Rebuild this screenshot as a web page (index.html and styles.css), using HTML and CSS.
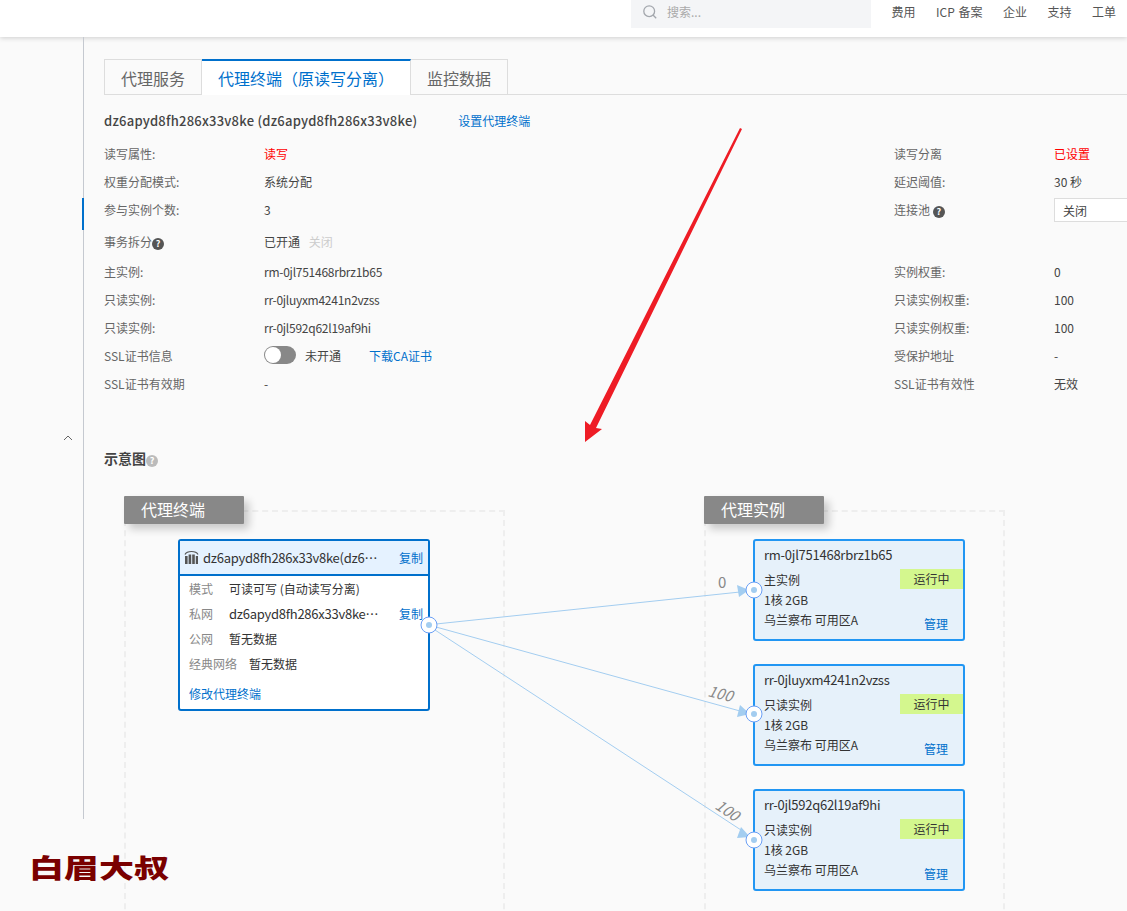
FILE: index.html
```html
<!DOCTYPE html>
<html lang="zh-CN">

<head>
<meta charset="utf-8">
<title>代理终端</title>
<link rel="stylesheet" href="styles.css">
</head>

<body>
	<div class="top">
		<div class="search">
			<svg class="search-icon" width="16" height="16" viewBox="0 0 16 16"><circle cx="7.2" cy="7.2" r="5.4" fill="none" stroke="#a3a7ad" stroke-width="1.3"/><path d="M11 11l3.2 3.2" stroke="#a3a7ad" stroke-width="1.3"/></svg>
			<span>搜索...</span>
		</div>
		<a href="#">费用</a>
		<a href="#">ICP 备案</a>
		<a href="#">企业</a>
		<a href="#">支持</a>
		<a href="#">工单</a>
	</div>

	<div class="page">
		<div class="side">
			<div class="side-mark"></div>
			<svg class="side-up" width="10" height="6" viewBox="0 0 10 6"><path d="M1 5l4-4 4 4" fill="none" stroke="#666" stroke-width="1"/></svg>
		</div>

		<div class="main">
			<div class="tabs">
				<a class="tab" href="#">代理服务</a>
				<a class="tab tab-on" href="#">代理终端（原读写分离）</a>
				<a class="tab" href="#">监控数据</a>
			</div>

			<div class="title-row">
				<span class="name">dz6apyd8fh286x33v8ke (dz6apyd8fh286x33v8ke)</span>
				<a class="link" href="#">设置代理终端</a>
			</div>

			<div class="info">
				<span class="lab">读写属性:</span><span class="red">读写</span>
				<span class="lab">读写分离</span><span class="red">已设置</span>

				<span class="lab">权重分配模式:</span><span>系统分配</span>
				<span class="lab">延迟阈值:</span><span>30 秒</span>

				<span class="lab">参与实例个数:</span><span>3</span>
				<span class="lab">连接池 <i class="help">?</i></span><span class="select">关闭</span>

				<span class="lab low">事务拆分<i class="help">?</i></span><span class="low">已开通 <em class="off">关闭</em></span>
				<span></span><span></span>

				<span class="lab">主实例:</span><span class="code">rm-0jl751468rbrz1b65</span>
				<span class="lab">实例权重:</span><span>0</span>

				<span class="lab">只读实例:</span><span class="code">rr-0jluyxm4241n2vzss</span>
				<span class="lab">只读实例权重:</span><span>100</span>

				<span class="lab">只读实例:</span><span class="code">rr-0jl592q62l19af9hi</span>
				<span class="lab">只读实例权重:</span><span>100</span>

				<span class="lab">SSL证书信息</span>
				<span class="ssl"><b class="switch"></b><span>未开通</span><a class="link" href="#">下载CA证书</a></span>
				<span class="lab">受保护地址</span><span>-</span>

				<span class="lab">SSL证书有效期</span><span>-</span>
				<span class="lab">SSL证书有效性</span><span>无效</span>
			</div>

			<h4 class="sub">示意图<i class="help help-light">?</i></h4>

			<div class="canvas">
				<div class="panel panel-a"></div>
				<div class="panel panel-b"></div>
				<div class="tag tag-a">代理终端</div>
				<div class="tag tag-b">代理实例</div>

				<div class="proxy">
					<div class="proxy-head">
						<svg class="proxy-icon" width="15" height="16" viewBox="0 0 15 16"><path d="M1 5.5C3 1.5 12 1.5 14 5.5" fill="none" stroke="#555" stroke-width="1.2"/><path d="M1 7h2.6v8H1zM4.6 5.5h2.6V15H4.6zM8.2 5.5h2.6V15H8.2zM11.8 7H14v8h-2.2z" fill="#555"/></svg>
						<span class="code head-cut">dz6apyd8fh286x33v8ke(dz6…</span>
						<a class="link copy" href="#">复制</a>
					</div>
					<div class="proxy-row"><span class="k">模式</span><span>可读可写 (自动读写分离)</span></div>
					<div class="proxy-row"><span class="k">私网</span><span class="code net-cut">dz6apyd8fh286x33v8ke…</span><a class="link copy" href="#">复制</a></div>
					<div class="proxy-row"><span class="k">公网</span><span>暂无数据</span></div>
					<div class="proxy-row"><span class="k k-wide">经典网络</span><span>暂无数据</span></div>
					<a class="link edit" href="#">修改代理终端</a>
				</div>

				<div class="inst inst-1">
					<div class="inst-name code">rm-0jl751468rbrz1b65</div>
					<div class="inst-row"><span>主实例</span><span class="run">运行中</span></div>
					<div class="inst-row">1核 2GB</div>
					<div class="inst-row">乌兰察布 可用区A</div>
					<a class="link manage" href="#">管理</a>
				</div>
				<div class="inst inst-2">
					<div class="inst-name code">rr-0jluyxm4241n2vzss</div>
					<div class="inst-row"><span>只读实例</span><span class="run">运行中</span></div>
					<div class="inst-row">1核 2GB</div>
					<div class="inst-row">乌兰察布 可用区A</div>
					<a class="link manage" href="#">管理</a>
				</div>
				<div class="inst inst-3">
					<div class="inst-name code">rr-0jl592q62l19af9hi</div>
					<div class="inst-row"><span>只读实例</span><span class="run">运行中</span></div>
					<div class="inst-row">1核 2GB</div>
					<div class="inst-row">乌兰察布 可用区A</div>
					<a class="link manage" href="#">管理</a>
				</div>

				<svg class="wires" width="1023" height="431" viewBox="104 480 1023 431">
					<g stroke="#a3cdf0" stroke-width="1" fill="none">
						<path d="M436 624L740 592"/>
						<path d="M436 627L740 711"/>
						<path d="M435 630L741 830"/>
					</g>
					<g fill="#a3cdf0">
						<path d="M749 590L737 585L739 597z"/>
						<path d="M750 714L740 705L737 717z"/>
						<path d="M750 837L741 827L737 838z"/>
					</g>
					<g fill="#fff" stroke="#6a9ff5" stroke-width="1">
						<circle cx="429" cy="625" r="8"/>
						<circle cx="754" cy="590" r="8"/>
						<circle cx="754" cy="714" r="8"/>
						<circle cx="754" cy="840" r="8"/>
					</g>
					<g fill="#a3cdf0">
						<circle cx="429" cy="625" r="3"/>
						<circle cx="754" cy="590" r="3"/>
						<circle cx="754" cy="714" r="3"/>
						<circle cx="754" cy="840" r="3"/>
					</g>
					<g class="weights">
						<text class="weight-flat" x="718" y="588">0</text>
						<text transform="translate(707 696) rotate(14)">100</text>
						<text transform="translate(714 808) rotate(34)">100</text>
					</g>
				</svg>
			</div>
		</div>
	</div>

	<svg class="arrow" width="170" height="320" viewBox="580 125 170 320"><path d="M740 128L742 129L596 428L602 429L585 442L585 421L590 425z" fill="#ee1c25"/></svg>
	<div class="mark">白眉大叔</div>
</body>

</html>
```
FILE: styles.css
```css
html, body {
	margin: 0;
	height: 911px;
	overflow: hidden;
}

body {
	background-color: #fafafa;
	color: #333;
	font-family: "Noto Sans CJK SC", sans-serif;
	font-size: 12px;
	position: relative;
}

a {
	text-decoration: none;
}

.link {
	color: #0070cc;
}

.code {
	letter-spacing: -0.25px;
}

.top {
	height: 37px;
	background-color: #fff;
	box-shadow: 0 1px 5px rgba(0, 0, 0, 0.18);
	display: flex;
	justify-content: flex-end;
	gap: 20.5px;
	padding-right: 11px;
	position: relative;
}

.top a {
	color: #555;
	line-height: 24px;
	word-spacing: 1px;
}

.search {
	width: 240px;
	height: 28px;
	padding: 0 0 5px 11px;
	background-color: #f4f5f7;
	color: #aaa;
	display: flex;
	align-items: center;
	gap: 9px;
	box-sizing: border-box;
}

.page {
	display: flex;
}

.side {
	width: 83px;
	height: 782px;
	border-right: 1px solid #c5c9d0;
	position: relative;
	flex: none;
}

.side-mark {
	position: absolute;
	right: -1px;
	top: 161px;
	width: 2px;
	height: 32px;
	background-color: #0070cc;
}

.side-up {
	position: absolute;
	left: 63px;
	top: 398px;
}

.main {
	flex: 1;
	padding: 22px 0 0 20px;
	min-width: 0;
}

.tabs {
	display: flex;
	height: 36px;
	box-sizing: border-box;
	border-bottom: 1px solid #ddd;
}

.tab {
	height: 36px;
	box-sizing: border-box;
	border: 1px solid #ddd;
	padding: 0 16px;
	font-size: 16px;
	line-height: 37px;
	color: #666;
}

.tab + .tab {
	border-left: 0;
}

.tab-on {
	border-top: 2px solid #0070cc;
	border-bottom: 0;
	background-color: #fff;
	color: #0070cc;
	line-height: 35px;
}

.title-row {
	display: flex;
	align-items: center;
	height: 51px;
	gap: 41px;
}

.name {
	font-size: 13px;
	font-weight: 500;
	letter-spacing: 0.23px;
	color: #444;
}

.info {
	display: grid;
	grid-template-columns: 160px 630px 160px 1fr;
	grid-template-rows: 28px 28px 28px 34px 28px 28px 28px 28px 28px;
	align-items: center;
	margin-top: -7px;
	color: #444;
}

.lab {
	color: #666;
}

.low {
	margin-top: 2px;
}

.red {
	color: #f00;
}

.help {
	display: inline-block;
	width: 12px;
	height: 12px;
	border-radius: 50%;
	background-color: #555;
	color: #fff;
	font-size: 9px;
	font-weight: 700;
	font-style: normal;
	line-height: 12px;
	text-align: center;
	vertical-align: 0;
}

.help-light {
	background-color: #bbb;
}

.off {
	color: #ccc;
	font-style: normal;
	margin-left: 6px;
}

.select {
	height: 24px;
	line-height: 23px;
	background-color: #fff;
	border: 1px solid #ddd;
	padding-left: 8px;
	box-sizing: border-box;
	margin-top: 2px;
	width: 100px;
}

.ssl {
	display: flex;
	align-items: center;
}

.ssl .link {
	margin-left: 28px;
}

.switch {
	display: block;
	width: 32px;
	height: 18px;
	border-radius: 9px;
	background-color: #888;
	margin-right: 9px;
	position: relative;
}

.switch:after {
	content: "";
	position: absolute;
	left: 1px;
	top: 1px;
	width: 16px;
	height: 16px;
	border-radius: 50%;
	background-color: #fff;
}

.sub {
	margin: 51px 0 0;
	height: 20px;
	line-height: 20px;
	font-size: 14px;
	font-weight: 700;
	color: #444;
}

.canvas {
	position: relative;
	height: 431px;
	margin-top: 12px;
	overflow: hidden;
}

.panel {
	position: absolute;
	top: 30px;
	height: 500px;
	border: 2px dashed #eee;
	box-sizing: border-box;
}

.panel-a {
	left: 20px;
	width: 381px;
}

.panel-b {
	left: 600px;
	width: 301px;
}

.tag {
	position: absolute;
	top: 16px;
	width: 120px;
	height: 28px;
	padding-left: 17px;
	box-sizing: border-box;
	background-color: #888;
	color: #fff;
	font-size: 16px;
	line-height: 27px;
	border-radius: 1px;
	box-shadow: 5px 5px 8px rgba(0, 0, 0, 0.2);
}

.tag-a {
	left: 20px;
}

.tag-b {
	left: 600px;
}

.proxy {
	position: absolute;
	left: 74px;
	top: 59px;
	width: 252px;
	height: 172px;
	box-sizing: border-box;
	border: 2px solid #0070cc;
	border-radius: 3px;
	background-color: #fff;
}

.proxy-head {
	height: 35px;
	box-sizing: border-box;
	background-color: #e5f2ff;
	border-bottom: 2px solid #0070cc;
	display: flex;
	align-items: center;
	padding: 0 4px 1px 4px;
	gap: 4px;
	font-size: 13px;
	color: #333;
}

.proxy-icon {
	flex: none;
}

.head-cut {
	width: 169px;
	margin-right: 23px;
	white-space: nowrap;
}

.copy {
	flex: none;
	font-size: 12px;
}

.proxy-row {
	display: flex;
	height: 25px;
	line-height: 25px;
	padding-left: 9px;
	color: #333;
}

.k {
	width: 40px;
	color: #888;
	flex: none;
}

.k-wide {
	width: 60px;
}

.net-cut {
	width: 145px;
	margin-right: 25px;
	font-size: 13px;
	white-space: nowrap;
}

.edit {
	display: block;
	margin: 6px 0 0 9px;
	line-height: 24px;
}

.inst {
	position: absolute;
	left: 649px;
	width: 212px;
	height: 102px;
	box-sizing: border-box;
	border: 2px solid #2196f3;
	border-radius: 3px;
	background-color: #e6f1fa;
	padding-left: 9px;
	color: #333;
}

.inst-1 {
	top: 59px;
}

.inst-2 {
	top: 184px;
}

.inst-3 {
	top: 309px;
}

.inst-name {
	font-size: 13px;
	line-height: 20px;
	margin: 4px 0 4px;
}

.inst-row {
	display: flex;
	justify-content: space-between;
	align-items: center;
	height: 20px;
}

.run {
	width: 63px;
	height: 20px;
	line-height: 20px;
	text-align: center;
	background-color: #d4f78e;
}

.manage {
	position: absolute;
	right: 15px;
	bottom: 5px;
	line-height: 20px;
}

.wires {
	position: absolute;
	left: 0;
	top: 0;
	pointer-events: none;
}

.weights {
	fill: #888;
	font-size: 15px;
	font-style: italic;
}

.weight-flat {
	font-style: normal;
}

.arrow {
	position: absolute;
	left: 580px;
	top: 125px;
}

.mark {
	position: absolute;
	left: 29px;
	top: 845px;
	font-size: 35px;
	font-weight: 900;
	line-height: 44px;
	color: #7a0000;
	white-space: nowrap;
	transform: scaleY(0.75);
}
```
